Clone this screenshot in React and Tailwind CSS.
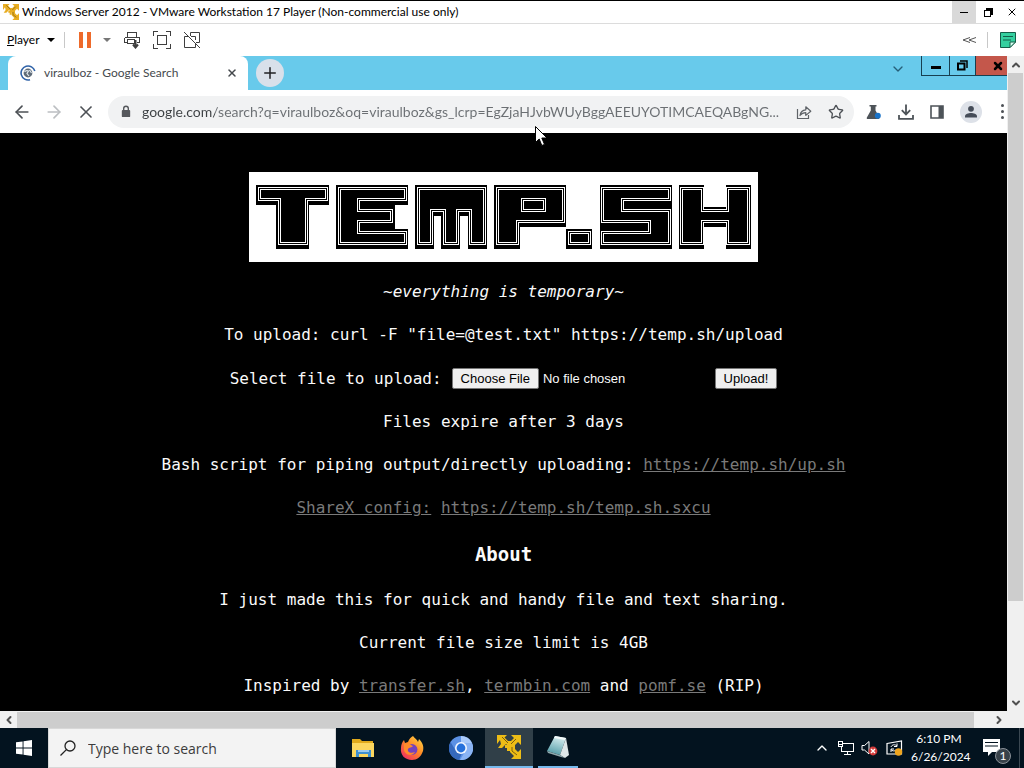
import React, { useState } from 'react';
import { X, Plus, ArrowLeft, ArrowRight, ChevronDown, ChevronUp, ChevronLeft, ChevronRight, Star } from 'lucide-react';

const VmwareLogo = ({ className }) => (
  <svg viewBox="0 0 24 24" className={className} fill="currentColor">
    <path d="M0 0H10L7.5 2.5L11 6H14L17 3L14 0H24V10L21 7L18 10V14L21 17L24 14V24H14L17 21L13 17V13L9 9L5 13H1L4 9L3 5L0 9Z" />
    <path d="M8 10H13V16H10V13H8Z" />
    <path d="M5 2L11 8M19 4L14 9M15 12V16L20 20" stroke="#7d5f0c" strokeWidth="1" fill="none" />
  </svg>
);

const SendKeysIcon = () => (
  <svg viewBox="0 0 18 18" className="h-[18px] w-[18px]" fill="none" stroke="#3f3f3f" shapeRendering="crispEdges">
    <path d="M4.5 6V1.5H13.5V6M1.5 6.5H16.5V11.5H14M1.5 6.5V11.5H4M4.5 8.5H11.5V12.5H4.5Z" />
    <path d="M12.5 9V16M10 13.5L12.5 16.5L15 13.5" strokeWidth="2" shapeRendering="auto" />
  </svg>
);

const FullScreenIcon = () => (
  <svg viewBox="0 0 18 18" className="h-[18px] w-[18px]" fill="none" stroke="#3f3f3f" shapeRendering="crispEdges">
    <path d="M0.5 5V0.5H5M13 0.5H17.5V5M17.5 13V17.5H13M5 17.5H0.5V13" />
    <path d="M4.5 4.5H13.5V13.5H4.5Z" />
  </svg>
);

const UnityIcon = () => (
  <svg viewBox="0 0 18 18" className="h-[18px] w-[18px]" fill="none" stroke="#3f3f3f">
    <path d="M7.5 5V1.5H16.5V11.5H13M1.5 5.5H5M12.5 12.5V16.5H1.5V5.5M8 5.5H12.5V9" />
    <path d="M1 1L17 17" />
  </svg>
);

const NoteIcon = () => (
  <svg viewBox="0 0 16 16" className="h-4 w-4">
    <path d="M0.5 0.5H15.5V10L10 15.5H0.5Z" fill="#35cf9f" stroke="#155c49" />
    <path d="M10 15.5V10H15.5Z" fill="#d5fff1" stroke="#155c49" />
    <path d="M3 4.5H13M3 8H11" stroke="#155c49" />
  </svg>
);

const LoadingGoogle = () => (
  <svg viewBox="0 0 16 16" className="h-4 w-4" fill="none">
    <path d="M14.8 6A7 7 0 1 0 10 14.7" stroke="#2f62a8" strokeWidth="1.6" />
    <circle cx="8" cy="8" r="4.4" fill="#5f6b78" />
    <path d="M4.5 7Q6 5 8.5 6L7 8.5L9 11M9.5 5L11.5 8" stroke="#dfe7ee" strokeWidth="1.2" />
  </svg>
);

const LockIcon = () => (
  <svg viewBox="0 0 10 14" className="h-[13px] w-[10px]">
    <path d="M2.5 6V3.8a2.5 2.5 0 0 1 5 0V6" fill="none" stroke="#55585c" strokeWidth="1.5" />
    <rect x="0.5" y="5.5" width="9" height="7.5" rx="1" fill="#55585c" />
  </svg>
);

const ShareIcon = () => (
  <svg viewBox="0 0 16 16" className="h-4 w-4" fill="none" stroke="#5f6368" strokeWidth="1.2">
    <path d="M1.5 5V14.5H12.5V11" />
    <path d="M4 11.5C4.5 8 6.5 6 9.8 5.8V2.8L14.8 7.2L9.8 11.4V8.6C7.2 8.6 5.5 9.5 4 11.5Z" strokeLinejoin="round" />
  </svg>
);

const FlaskIcon = () => (
  <svg viewBox="0 0 16 16" className="h-4 w-4">
    <path d="M3.5 1H10.5V2.6H9.5V6.5L13.5 13.5Q13.5 15 12 15H2Q0 15 1 13.2L4.8 6.5V2.6H3.5Z" fill="#4d5358" />
    <circle cx="11.8" cy="11.8" r="3" fill="#1a73c8" />
  </svg>
);

const DownloadIcon = () => (
  <svg viewBox="0 0 16 16" className="h-4 w-4" fill="none" stroke="#4d5358" strokeWidth="1.8">
    <path d="M8 0.5V10M3.8 6.2L8 10.4L12.2 6.2M1 11V14.8H15V11" />
  </svg>
);

const SidePanelIcon = () => (
  <svg viewBox="0 0 14 14" className="h-[14px] w-[14px]">
    <path d="M1 1H13V13H1Z" fill="none" stroke="#4d5358" strokeWidth="1.6" />
    <path d="M8.5 1H13V13H8.5Z" fill="#4d5358" />
  </svg>
);

const AvatarIcon = () => (
  <svg viewBox="0 0 22 22" className="h-[22px] w-[22px]">
    <circle cx="11" cy="11" r="11" fill="#dde1e8" />
    <circle cx="11" cy="7.8" r="2.9" fill="#454c58" />
    <path d="M5 16.5V15.2C5 13 8.5 12 11 12S17 13 17 15.2V16.5Z" fill="#454c58" />
  </svg>
);

// each letter is a block shape with a double line drawn inside it
const LETTERS = [
  { name: 'T', block: 'M7 13H80V33H60V77H27V33H7Z', line: 'M10.5 16.5H77.5V27.5H57.5V71.5H30.5V27.5H10.5Z' },
  { name: 'E', block: 'M87 13H159V33H146V57H159V77H87Z', line: 'M90.5 16.5H156.5V27.5H109.5V38.5H142.5V49.5H109.5V60.5H156.5V71.5H90.5Z' },
  { name: 'M', block: 'M166 13H238V77H219V44H211V77H192V44H185V77H166Z', line: 'M169.5 16.5H235.5V71.5H221.5V38.5H208.5V71.5H195.5V38.5H182.5V71.5H169.5Z' },
  { name: 'P', block: 'M245 13H317V55H271V77H245Z', line: 'M248.5 16.5H314.5V49.5H268.5V71.5H248.5ZM273.5 27.5H295.5V38.5H273.5Z' },
  { name: 'dot', block: 'M317 57H343V77H317Z', line: 'M320.5 60.5H340.5V71.5H320.5Z' },
  { name: 'S', block: 'M351 13H423V77H351Z', line: 'M353.5 16.5H420.5V27.5H373.5V38.5H420.5V71.5H353.5V60.5H400.5V49.5H353.5Z' },
  { name: 'H', block: 'M430 13H455V35H477V13H502V77H477V55H455V77H430Z', line: 'M432.5 16.5H453.5V38.5H478.5V16.5H499.5V71.5H478.5V49.5H453.5V71.5H432.5Z' },
];

const TempLogo = () => (
  <svg viewBox="0 0 509 90" className="mb-[18px] h-[90px] w-[509px] bg-white" fill="none" role="img" aria-label="TEMP.SH" shapeRendering="crispEdges">
    {LETTERS.map((l) => (
      <g key={l.name}>
        <path d={l.block} fill="#000" />
        <path d={l.line} stroke="#fff" strokeWidth="3" />
        <path d={l.line} stroke="#000" strokeWidth="1" />
      </g>
    ))}
  </svg>
);

const TitleBar = () => (
  <header className="flex h-6 items-center border-b border-t border-b-[#dcdcdc] border-t-black bg-white pl-[3px] text-[12px] text-black">
    <VmwareLogo className="h-4 w-4 text-[#e8ad22]" />
    <h1 className="ml-[3px] flex-1 whitespace-nowrap">Windows Server 2012 - VMware Workstation 17 Player (Non-commercial use only)</h1>
    <button aria-label="Minimize" className="flex h-[22px] w-6 items-center justify-center bg-[#d9d9d9]">
      <span className="h-px w-2 bg-black" />
    </button>
    <button aria-label="Restore" className="flex h-[22px] w-6 items-center justify-center">
      <svg viewBox="0 0 9 9" className="h-[9px] w-[9px]" fill="none" stroke="#000" shapeRendering="crispEdges">
        <path d="M2 0.5H8.5V7M2 1.5H8M7.5 1V7" />
        <path d="M1 2.5H6.5V8.5H0.5V2.5Z" />
      </svg>
    </button>
    <button aria-label="Close" className="flex h-[22px] w-6 items-center justify-center">
      <X className="h-3 w-3" strokeWidth={2} />
    </button>
  </header>
);

const PlayerBar = () => (
  <div className="flex h-8 items-center bg-white pl-[7px] pr-2 text-[12px] text-black">
    <button className="flex w-12 items-center justify-between">
      <span><u>P</u>layer</span>
      <span className="border-x-4 border-t-4 border-x-transparent border-t-black" />
    </button>
    <span className="ml-[9px] h-4 w-px bg-[#c8c8c8]" />
    <button aria-label="Pause" className="ml-[14px] flex gap-1">
      <span className="h-4 w-1 bg-[#ee6a2b]" />
      <span className="h-4 w-1 bg-[#ee6a2b]" />
    </button>
    <button aria-label="Power options" className="ml-3 border-x-4 border-t-4 border-x-transparent border-t-[#777]" />
    <div className="ml-3 flex gap-3">
      <button aria-label="Send Ctrl+Alt+Del"><SendKeysIcon /></button>
      <button aria-label="Full screen"><FullScreenIcon /></button>
      <button aria-label="Unity"><UnityIcon /></button>
    </div>
    <button aria-label="Collapse" className="ml-auto">
      <svg viewBox="0 0 14 6" className="h-[6px] w-[14px]" fill="none" stroke="#555">
        <path d="M8 0.5L1 3L8 5.5M14 0.5L7 3L14 5.5" />
      </svg>
    </button>
    <span className="ml-[11px] h-4 w-px bg-[#c8c8c8]" />
    <button aria-label="Notes" className="ml-3"><NoteIcon /></button>
  </div>
);

const TabStrip = () => (
  <div className="flex h-[34px] bg-[#68caeb] pl-2">
    <div className="flex w-60 items-center rounded-t-lg bg-white pl-3 pr-2 text-[12px] text-[#45494d]">
      <LoadingGoogle />
      <span className="ml-2 flex-1 whitespace-nowrap">viraulboz - Google Search</span>
      <button aria-label="Close tab" className="px-[2px]"><X className="h-3 w-3" strokeWidth={3} /></button>
    </div>
    <button aria-label="New tab" className="ml-2 mt-[3px] flex h-7 w-7 items-center justify-center rounded-full bg-[#d9e0ea]">
      <Plus className="h-[18px] w-[18px] text-[#202124]" strokeWidth={2} />
    </button>
    <button aria-label="Search tabs" className="ml-auto mr-[15px] mt-[5px] h-4"><ChevronDown className="h-4 w-4 text-[#255e78]" strokeWidth={2} /></button>
    <div className="flex h-5 border-b border-l border-[#173f50] text-black">
      <button aria-label="Minimize browser" className="flex w-7 items-center justify-center border-r border-[#173f50]">
        <span className="mt-1 h-[3px] w-[10px] bg-black" />
      </button>
      <button aria-label="Restore browser" className="flex w-[26px] items-center justify-center border-r border-[#173f50]">
        <svg viewBox="0 0 11 11" className="h-[11px] w-[11px]" fill="none" stroke="#000">
          <path d="M3 1H10V8" strokeWidth="1.5" />
          <path d="M1 3.5H7.5V9.5H1Z" strokeWidth="2" />
        </svg>
      </button>
      <button aria-label="Close browser" className="flex w-[31px] items-center justify-end bg-[#c4574b] pr-[3px]">
        <X className="h-3 w-3" strokeWidth={5} />
      </button>
    </div>
  </div>
);

const AddressBar = () => {
  const [url, setUrl] = useState('google.com/search?q=viraulboz&oq=viraulboz&gs_lcrp=EgZjaHJvbWUyBggAEEUYOTIMCAEQABgNG...');

  return (
    <div className="flex h-[43px] items-center bg-white pl-3 text-[#5f6368]">
      <div className="flex gap-3">
        <button aria-label="Back"><ArrowLeft className="h-5 w-5 text-[#4d5156]" strokeWidth={2} /></button>
        <button aria-label="Forward"><ArrowRight className="h-5 w-5 text-[#bcbfc2]" strokeWidth={2} /></button>
        <button aria-label="Stop"><X className="h-5 w-5 text-[#4d5156]" strokeWidth={2} /></button>
      </div>
      <div className="ml-3 flex h-8 min-w-0 flex-1 items-center rounded-full bg-[#f1f2f3] pl-[13px] pr-[10px]">
        <LockIcon />
        {/* the host part of the address is darker than the path */}
        <input
          type="text"
          aria-label="Address"
          value={url}
          onChange={(e) => setUrl(e.target.value)}
          className="ml-[11px] min-w-0 flex-1 bg-[linear-gradient(to_right,#3c4043_73px,#6b6f73_73px)] bg-clip-text text-[14px] text-transparent outline-none"
        />
        <button aria-label="Share" className="ml-2"><ShareIcon /></button>
        <button aria-label="Bookmark" className="ml-4"><Star className="h-4 w-4 text-[#4d5156]" strokeWidth={2} /></button>
      </div>
      <div className="ml-3 flex items-center gap-4">
        <button aria-label="Labs"><FlaskIcon /></button>
        <button aria-label="Downloads"><DownloadIcon /></button>
        <button aria-label="Side panel"><SidePanelIcon /></button>
        <button aria-label="Profile"><AvatarIcon /></button>
      </div>
      <button aria-label="Menu" className="ml-[19px] mr-[3px] flex flex-col gap-[3px]">
        <span className="h-[3px] w-[3px] rounded-full bg-[#4d5156]" />
        <span className="h-[3px] w-[3px] rounded-full bg-[#4d5156]" />
        <span className="h-[3px] w-[3px] rounded-full bg-[#4d5156]" />
      </button>
    </div>
  );
};

const PageLink = ({ href, children }) => (
  <a href={href} className="text-[#7a7a7a] underline">{children}</a>
);

const TempPage = () => {
  const [file, setFile] = useState(null);

  return (
    <main className="flex flex-1 flex-col items-center bg-black pt-[39px] font-['DejaVu_Sans_Mono',monospace] text-[16px] leading-6 text-[#fafafa]">
      <TempLogo />
      <p className="mb-[19px] italic">~everything is temporary~</p>
      <p className="mb-[19px]">To upload: curl -F "file=@test.txt" https://temp.sh/upload</p>
      <form className="mb-[19px] flex h-[25px] items-center" onSubmit={(e) => e.preventDefault()}>
        <label htmlFor="file">Select file to upload:</label>
        <input
          id="file"
          type="file"
          onChange={(e) => setFile(e.target.files[0])}
          className="ml-[10px] w-[253px] font-['Liberation_Sans',Arial,sans-serif] text-[13px] leading-5 file:mr-1 file:h-[21px] file:rounded-xs file:border file:border-solid file:border-[#767676] file:bg-[#efefef] file:px-2 file:text-black"
        />
        <button
          type="submit"
          title={file ? file.name : undefined}
          className="ml-[10px] h-[21px] rounded-xs border border-[#767676] bg-[#efefef] px-2 font-['Liberation_Sans',Arial,sans-serif] text-[13px] leading-4 text-black"
        >
          Upload!
        </button>
      </form>
      <p className="mb-[19px]">Files expire after 3 days</p>
      <p className="mb-[19px]">Bash script for piping output/directly uploading: <PageLink href="#up">https://temp.sh/up.sh</PageLink></p>
      <p className="mb-[19px]"><PageLink href="#sharex">ShareX config:</PageLink> <PageLink href="#sxcu">https://temp.sh/temp.sh.sxcu</PageLink></p>
      <h2 className="mb-[19px] text-[19px] font-bold leading-[30px]">About</h2>
      <p className="mb-[19px]">I just made this for quick and handy file and text sharing.</p>
      <p className="mb-[19px]">Current file size limit is 4GB</p>
      <p>Inspired by <PageLink href="#transfer">transfer.sh</PageLink>, <PageLink href="#termbin">termbin.com</PageLink> and <PageLink href="#pomf">pomf.se</PageLink> (RIP)</p>
    </main>
  );
};

const VerticalScroll = () => (
  <div className="flex w-[17px] flex-col bg-[#f0f0f0] text-[#505050]">
    <button aria-label="Scroll up" className="flex h-[17px] items-center justify-center"><ChevronUp className="h-3 w-3" strokeWidth={4} /></button>
    <div className="flex flex-1 flex-col">
      <div className="mx-px h-[85%] bg-[#cdcdcd]" />
    </div>
    <button aria-label="Scroll down" className="flex h-[17px] items-center justify-center"><ChevronDown className="h-3 w-3" strokeWidth={4} /></button>
  </div>
);

const HorizontalScroll = () => (
  <div className="flex h-[17px] bg-[#f0f0f0] pr-[17px] text-[#505050]">
    <button aria-label="Scroll left" className="flex w-[17px] items-center justify-center"><ChevronLeft className="h-3 w-3" strokeWidth={4} /></button>
    <div className="mr-4 mt-px flex-1 bg-[#cdcdcd]" />
    <button aria-label="Scroll right" className="flex w-[17px] items-center justify-center"><ChevronRight className="h-3 w-3" strokeWidth={4} /></button>
  </div>
);

const ExplorerIcon = () => (
  <svg viewBox="0 0 24 24" className="h-6 w-6">
    <path d="M1 3H9L11 5H22V21H1Z" fill="#e0a91c" />
    <path d="M1 7H23V21H1Z" fill="#fbd65f" />
    <path d="M5 14H20V21H17V18H8V21H5Z" fill="#3e8fd0" />
    <path d="M7 14H18V16H7Z" fill="#9bcaf0" />
  </svg>
);

const FirefoxIcon = () => (
  <svg viewBox="0 0 24 24" className="h-6 w-6">
    <defs>
      <linearGradient id="fox" x1="1" y1="0" x2="0.2" y2="1">
        <stop offset="0" stopColor="#ffe14a" />
        <stop offset="0.5" stopColor="#ff8a25" />
        <stop offset="1" stopColor="#f02e62" />
      </linearGradient>
    </defs>
    <path d="M13 0C15 3 17 3 18 6L19 3C23 7 24 11 23 15C21 21 17 24 12 24C5 24 0 19 1 12C1 9 2 6 4 4L5 7L8 6C9 3 11 1 13 0Z" fill="url(#fox)" />
    <circle cx="12" cy="13.5" r="5.4" fill="#7542bd" />
    <path d="M4 8C8 6 10 9 13 10C12 12 9 11 8 13C7 16 11 18 15 16C12 21 5 19 4 14Z" fill="#ff8b2b" />
  </svg>
);

const ChromiumIcon = () => (
  <svg viewBox="0 0 24 24" className="h-6 w-6">
    <circle cx="12" cy="12" r="12" fill="#5b91e5" />
    <path d="M12 0A12 12 0 0 1 23 7H12Z" fill="#a9cafa" />
    <path d="M23 7A12 12 0 0 1 11 24L17 14L16 7Z" fill="#8ab4f4" />
    <path d="M1.5 6L7 15L13 17L10 24A12 12 0 0 1 1.5 6Z" fill="#3569bd" />
    <circle cx="12" cy="12" r="6" fill="#f2f7ff" />
    <circle cx="12" cy="12" r="4.4" fill="#2671db" />
  </svg>
);

const NotepadIcon = () => (
  <svg viewBox="0 0 24 24" className="h-6 w-6">
    <defs>
      <linearGradient id="pad" x1="0.6" y1="0" x2="0.3" y2="1">
        <stop offset="0" stopColor="#d9eff1" />
        <stop offset="1" stopColor="#4f9aa6" />
      </linearGradient>
    </defs>
    <path d="M9 1L20 3L14 20L1 16Z" fill="url(#pad)" />
    <path d="M20 3L23 20L19 23L14 20Z" fill="#dfe8ea" />
    <path d="M1 16L14 20L19 23L15 22L2 18Z" fill="#8fa9ae" />
    <path d="M9 1L20 3L19 5L8 3Z" fill="#f3f9fa" />
  </svg>
);

const Taskbar = () => (
  <footer className="flex h-10 bg-[#03131f] text-white">
    <button aria-label="Start" className="flex w-12 items-center justify-center">
      <svg viewBox="0 0 16 16" className="h-4 w-4" fill="#fff">
        <path d="M0 2.3L6.6 1.4V7.5H0ZM7.5 1.3L16 0V7.5H7.5ZM0 8.4H6.6V14.6L0 13.7ZM7.5 8.4H16V16L7.5 14.7Z" />
      </svg>
    </button>
    <label className="flex w-72 items-center border border-[#d8d8d8] bg-[#f3f3f3] pl-[11px]">
      <svg viewBox="0 0 16 16" className="h-4 w-4" fill="none" stroke="#222" strokeWidth="1.3">
        <circle cx="10" cy="6" r="5" />
        <path d="M6.4 9.6L0.5 15.5" />
      </svg>
      <input type="text" aria-label="Search" placeholder="Type here to search" className="ml-3 w-56 bg-transparent font-['Open_Sans','Segoe_UI',sans-serif] text-[14px] outline-none placeholder:text-[#3c3c3c]" />
    </label>
    <nav className="ml-[2px] flex">
      <button aria-label="File Explorer" className="flex w-[49px] items-center justify-center"><ExplorerIcon /></button>
      <button aria-label="Firefox" className="flex w-[49px] items-center justify-center"><FirefoxIcon /></button>
      <button aria-label="Chromium" className="flex w-[49px] items-center justify-center"><ChromiumIcon /></button>
      <button aria-label="VMware Player" className="flex w-12 items-center justify-center border-b-2 border-[#76b9ed] bg-[#303f48]">
        <VmwareLogo className="h-6 w-6 text-[#edbd16]" />
      </button>
      <button aria-label="Notepad" className="ml-[5px] flex w-10 items-center justify-center border-b-2 border-[#76b9ed]"><NotepadIcon /></button>
    </nav>
    <div className="ml-auto flex items-center">
      <button aria-label="Hidden icons"><ChevronUp className="h-4 w-4" strokeWidth={2} /></button>
      <svg viewBox="0 0 16 16" className="ml-2 h-4 w-4" fill="none" stroke="#fff" shapeRendering="crispEdges">
        <path d="M5 3.5H15.5V11.5H3.5V7M9.5 11.5V14.5M6 14.5H13M0.5 1.5H4.5V6.5H0.5ZM0.5 4.5H4" />
      </svg>
      <svg viewBox="0 0 17 16" className="ml-[7px] h-4 w-[17px]" fill="none">
        <path d="M1 5.5H3.5L8 1.5V14L3.5 10H1Z" stroke="#fff" />
        <circle cx="12" cy="11" r="4.4" fill="#d23b3b" />
        <path d="M10 9L14 13M14 9L10 13" stroke="#fff" strokeWidth="1.4" />
      </svg>
      <svg viewBox="0 0 17 16" className="ml-2 h-4 w-[17px]" fill="none">
        <path d="M1 3.5L15.5 1V14L1 14Z" stroke="#fff" strokeWidth="1.2" />
        <path d="M5 7C6 4.5 9 4 11 6M11 3.5V6.5H8M10 10C8.5 11.5 6 11 5 9.5M5 12V9H8" stroke="#fff" />
        <circle cx="12.5" cy="12" r="3.7" fill="#f0a51e" />
      </svg>
      <div className="ml-2 w-14 whitespace-nowrap text-center text-[12px] leading-[18px]">
        <p>6:10 PM</p>
        <p>6/26/2024</p>
      </div>
      <button aria-label="Notifications" className="relative ml-4 h-6 w-6">
        <svg viewBox="0 0 24 24" className="h-6 w-6">
          <path d="M0 3H17V16H9L5 20V16H0Z" fill="#fff" />
          <path d="M2 6.5H15M2 10H15" stroke="#03131f" strokeWidth="1.2" />
        </svg>
        <span className="absolute -bottom-1 -right-1 flex h-4 w-4 items-center justify-center rounded-full border border-[#8b9299] bg-[#38424a] text-[12px] leading-4">1</span>
      </button>
      <span className="ml-3 mr-1 h-10 w-px bg-[#3b4852]" />
    </div>
  </footer>
);

export default function App() {
  return (
    <div className="relative flex min-h-screen w-full flex-col overflow-hidden bg-white font-['Lato','Segoe_UI',sans-serif]">
      <TitleBar />
      <PlayerBar />
      <div className="flex flex-1">
        <div className="flex min-w-0 flex-1 flex-col">
          <TabStrip />
          <AddressBar />
          <TempPage />
        </div>
        <VerticalScroll />
      </div>
      <HorizontalScroll />
      <Taskbar />
      {/* mouse pointer */}
      <svg viewBox="0 0 13 21" className="pointer-events-none absolute left-[535px] top-[126px] h-[21px] w-[13px]">
        <path d="M0.5 0.5V16.5L4.2 13L6.8 19.5L9.5 18.4L6.8 12H12Z" fill="#fff" stroke="#000" />
      </svg>
    </div>
  );
}
